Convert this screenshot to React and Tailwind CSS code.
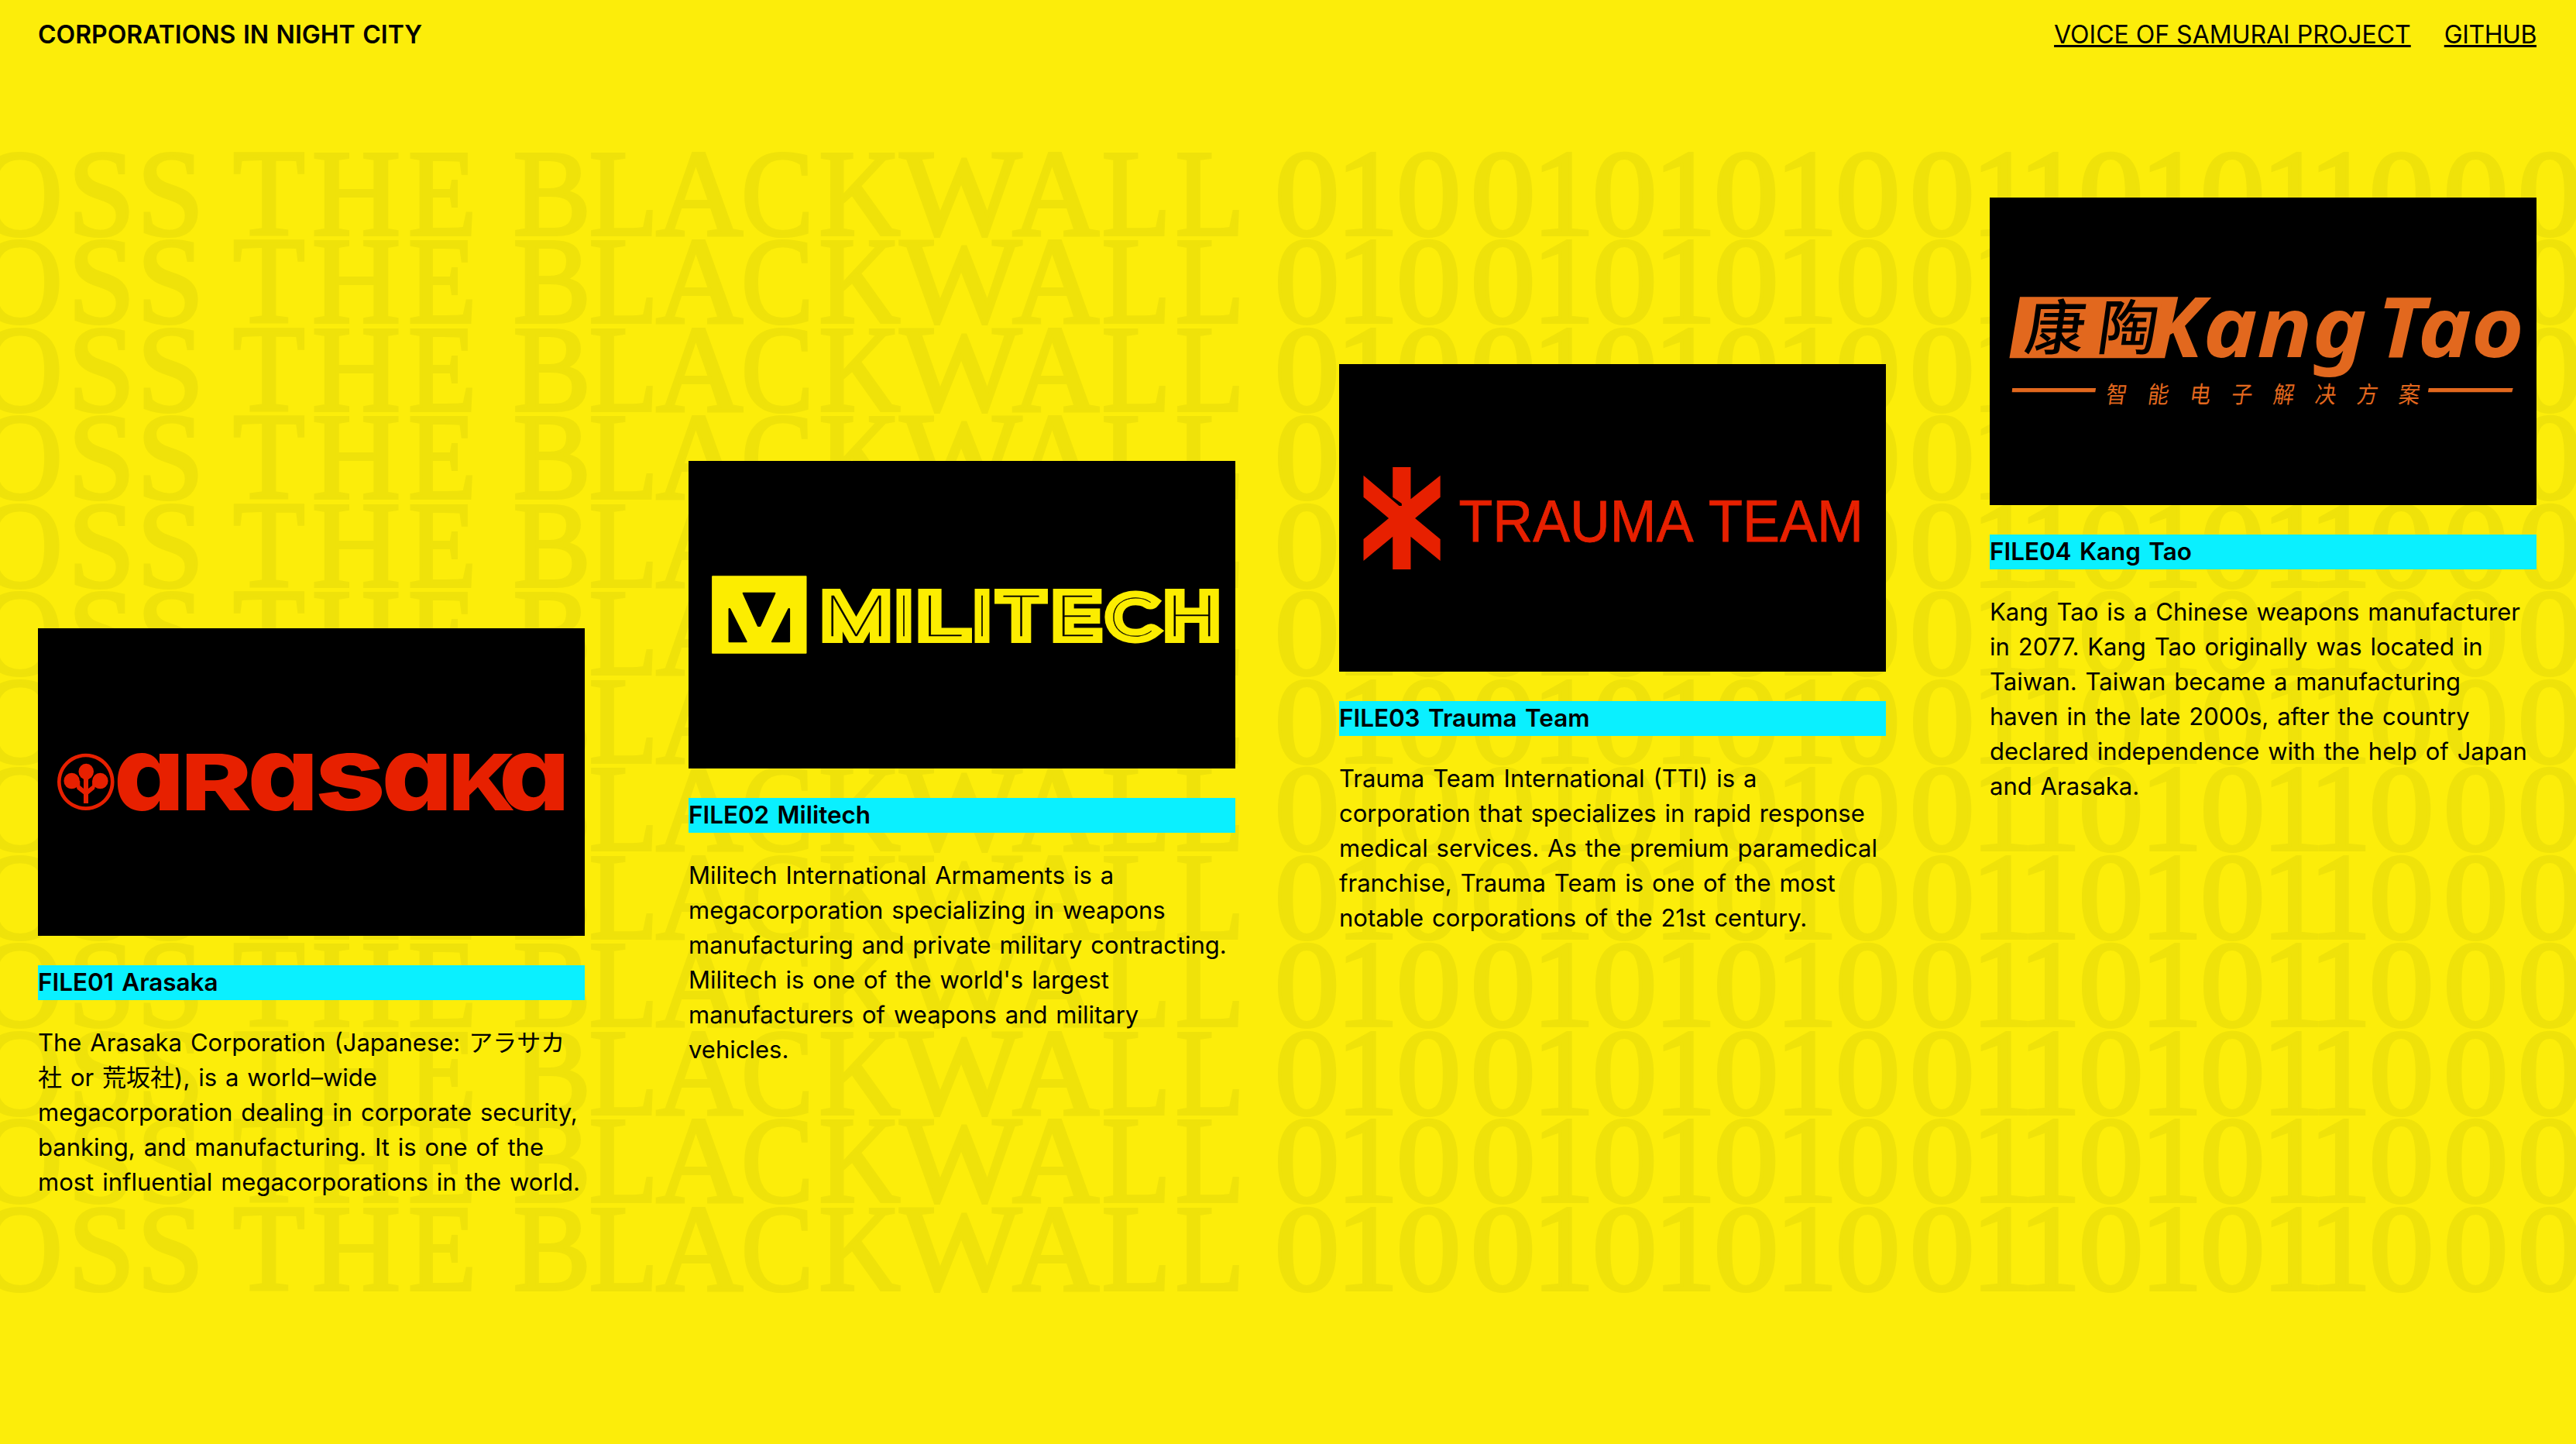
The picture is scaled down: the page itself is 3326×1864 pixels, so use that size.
const LETTERS = [
  ["O", 109, 0.96], ["S", 99, 0.98], ["S", 80, 0.98], [" ", 40, 1], ["T", 95, 0.96], ["H", 130, 1],
  ["E", 93, 0.91], [" ", 50, 1], ["B", 89, 0.95], ["L", 95.6, 0.92], ["A", 101.4, 0.98], ["C", 99.8, 0.88],
  ["K", 112.2, 0.92], ["W", 149.8, 1.05], ["A", 95.2, 0.98], ["L", 112.8, 0.92], ["L", 76.2, 0.92], [" ", 39.1, 1],
  ..."010010101001101011000".split("").map((d) => (d === "0" ? ["0", 96, 1.06] : ["1", 61, 1.02])),
];

function Backdrop() {
  return (
    <div aria-hidden="true" className="absolute inset-0 overflow-hidden pt-[192.6px] font-['Liberation_Serif',serif] text-[158px] text-[#efe20a] [-webkit-text-stroke:4px_#efe20a]">
      {Array.from({ length: 13 }, (_, row) => (
        <div key={row} className="-ml-7 flex h-[113.5px] leading-[113.5px] whitespace-pre">
          {LETTERS.map(([char, width, scale], i) => (
            <span key={i} className="flex shrink-0 justify-center" style={{ width }}>
              <span className="shrink-0" style={{ transform: `scaleX(${scale})` }}>{char}</span>
            </span>
          ))}
        </div>
      ))}
    </div>
  );
}

const logoClass = "block h-full w-full";

function ArasakaLogo() {
  const glyphs = [
    ["a", 102.7, 80.6, 134], ["R", 189, 81.3, 101], ["a", 275.5, 81, 134], ["s", 362.5, 80.5, 134],
    ["a", 448.6, 81, 134], ["K", 535, 76, 101], ["a", 600, 81, 134],
  ];
  return (
    <svg viewBox="0 0 706 397" className={logoClass} fill="#e72000">
      <g transform="translate(-9 129) scale(.4655 .3333)">
        <path fillRule="evenodd" d="M152 98a79 110 0 1 0 .1 0zM152 112a69 96 0 1 1-.1 0z" />
        <ellipse cx="153" cy="168" rx="21" ry="31" />
        <ellipse cx="113" cy="204" rx="22" ry="31" />
        <ellipse cx="192" cy="204" rx="22" ry="31" />
        <path d="M146 190H159V234L170 222V204H183L176 236L159 256V291H146V256L128 236L122 204H136V222L146 234z" />
      </g>
      <g className="font-['Inter',sans-serif] font-extrabold [font-feature-settings:'cv11']">
        {glyphs.map(([g, x, w, size], i) => (
          <text key={i} x={x - 5} y="234.5" fontSize={size} textLength={w + 11} lengthAdjust="spacingAndGlyphs">{g}</text>
        ))}
      </g>
    </svg>
  );
}

function MilitechLogo() {
  const glyphs = [
    ["M", 181, 71, 14], ["I", 277, 2, 15], ["L", 303, 51, 10], ["I", 378, 2, 15],
    ["T", 404, 51, 6], ["E", 478, 45, 12], ["C", 547, 50, 9], ["H", 624, 52, 15],
  ];
  return (
    <svg viewBox="0 0 706 397" className={logoClass}>
      <g transform="translate(-9 125) scale(.4655 .3333)">
        <rect x="84" y="70" width="263" height="301" rx="2" fill="#fced00" />
        <path stroke="#000" strokeWidth="6" strokeLinejoin="round" d="M172 137H258L217 264H213zM133 198L179 325H133zM298 198L252 325H298z" />
      </g>
      <g className="text-[71px] font-thin">
        {[0, 1].map((layer) => (
          <g
            key={layer}
            fill={layer ? "#000" : "#fced00"}
            stroke={layer ? "#000" : "#fced00"}
            strokeWidth={layer ? 0.3 : 18}
            strokeLinejoin="miter"
            strokeMiterlimit="1.5"
          >
            {glyphs.map(([g, x, w, bearing], i) => (
              <text
                key={i}
                x={x - bearing / 2}
                y="226"
                textLength={w + bearing}
                lengthAdjust="spacingAndGlyphs"
                className={g === "C" ? "font-['Lato',sans-serif]" : "font-['Inter',sans-serif]"}
              >
                {g}
              </text>
            ))}
          </g>
        ))}
      </g>
    </svg>
  );
}

function TraumaLogo() {
  return (
    <svg viewBox="0 0 706 397" className={logoClass} fill="#e72000">
      <path
        transform="translate(-9 110) scale(.4655 .3333)"
        d="M87 101L186 219H193V210L168 185V69H218V193L300 101V185L230 267L300 348V432L218 338V465H168V338L87 432V348L157 267L87 185z"
      />
      <g fontSize="75.6" stroke="#e72000" strokeWidth=".8" className="font-['Liberation_Sans',sans-serif]">
        <text x="154.5" y="228.7" textLength="303" lengthAdjust="spacingAndGlyphs">TRAUMA</text>
        <text x="477" y="228.7" textLength="200" lengthAdjust="spacingAndGlyphs">TEAM</text>
      </g>
    </svg>
  );
}

function KangTaoLogo() {
  return (
    <svg viewBox="0 0 706 397" className={logoClass} fill="#e2681e">
      <g transform="translate(-9 105) scale(.4655 .3333)">
        <path d="M103 70H542L505 307H74zM82 423H314L312 439H81zM1237 423H1471L1468 439H1235z" />
      </g>
      <g className="font-['Noto_Sans',sans-serif] font-bold italic">
        <text x="203" y="206" fontSize="107" textLength="284" lengthAdjust="spacingAndGlyphs">Kang</text>
        <text x="500" y="206" fontSize="107" textLength="190" lengthAdjust="spacingAndGlyphs">Tao</text>
      </g>
      <g className="font-['Noto_Sans_CJK_SC',sans-serif]" fill="#000">
        <text transform="translate(43 196) skewX(-8)" fontSize="77" fontWeight="500">康</text>
        <text transform="translate(137 196) skewX(-8)" fontSize="77" fontWeight="500">陶</text>
      </g>
      <g className="font-['Noto_Sans_CJK_SC',sans-serif]">
        {"智能电子解决方案".split("").map((c, i) => (
          <text key={c} transform={`translate(${149 + i * 54} 265) skewX(-8) scale(.9 1)`} fontSize="30">{c}</text>
        ))}
      </g>
    </svg>
  );
}

const FILES = [
  { title: "FILE01 Arasaka", Logo: ArasakaLogo, offset: "mt-[811px]", lines: ["The Arasaka Corporation (Japanese: アラサカ", "社 or 荒坂社), is a world–wide", "megacorporation dealing in corporate security,", "banking, and manufacturing. It is one of the", "most influential megacorporations in the world."] },
  { title: "FILE02 Militech", Logo: MilitechLogo, offset: "mt-[595px]", lines: ["Militech International Armaments is a", "megacorporation specializing in weapons", "manufacturing and private military contracting.", "Militech is one of the world's largest", "manufacturers of weapons and military", "vehicles."] },
  { title: "FILE03 Trauma Team", Logo: TraumaLogo, offset: "mt-[470px]", lines: ["Trauma Team International (TTI) is a", "corporation that specializes in rapid response", "medical services. As the premium paramedical", "franchise, Trauma Team is one of the most", "notable corporations of the 21st century."] },
  { title: "FILE04 Kang Tao", Logo: KangTaoLogo, offset: "mt-[255px]", lines: ["Kang Tao is a Chinese weapons manufacturer", "in 2077. Kang Tao originally was located in", "Taiwan. Taiwan became a manufacturing", "haven in the late 2000s, after the country", "declared independence with the help of Japan", "and Arasaka."] },
];

export default function App() {
  return (
    <div className="relative h-[1864px] w-[3326px] overflow-hidden bg-[#fced0a] font-['Inter','Noto_Sans_CJK_JP',sans-serif] text-[32px] leading-[45px] text-black">
      <Backdrop />
      <header className="absolute inset-x-0 top-0 flex justify-between pt-[22px] pr-[51px] pl-[49px] whitespace-nowrap">
        <h1 className="font-semibold [word-spacing:1.5px]">CORPORATIONS IN NIGHT CITY</h1>
        <nav className="flex gap-[43px]">
          <a className="underline decoration-[3px] underline-offset-[2px]">VOICE OF SAMURAI PROJECT</a>
          <a className="tracking-[-0.4px] underline decoration-[3px] underline-offset-[2px]">GITHUB</a>
        </nav>
      </header>
      <main className="relative flex items-start gap-[134px] pl-[49px]">
        {FILES.map(({ title, Logo, offset, lines }) => (
          <article key={title} className={`w-[706px] shrink-0 ${offset}`}>
            <div className="h-[397px] bg-black"><Logo /></div>
            <h2 className="mt-[38px] bg-[#0af0ff] text-[31.4px] font-semibold [word-spacing:2.5px]">{title}</h2>
            <p className="mt-8 text-[31px] whitespace-nowrap [word-spacing:2.2px]">
              {lines.map((line) => <span key={line} className="block">{line}</span>)}
            </p>
          </article>
        ))}
      </main>
    </div>
  );
}
